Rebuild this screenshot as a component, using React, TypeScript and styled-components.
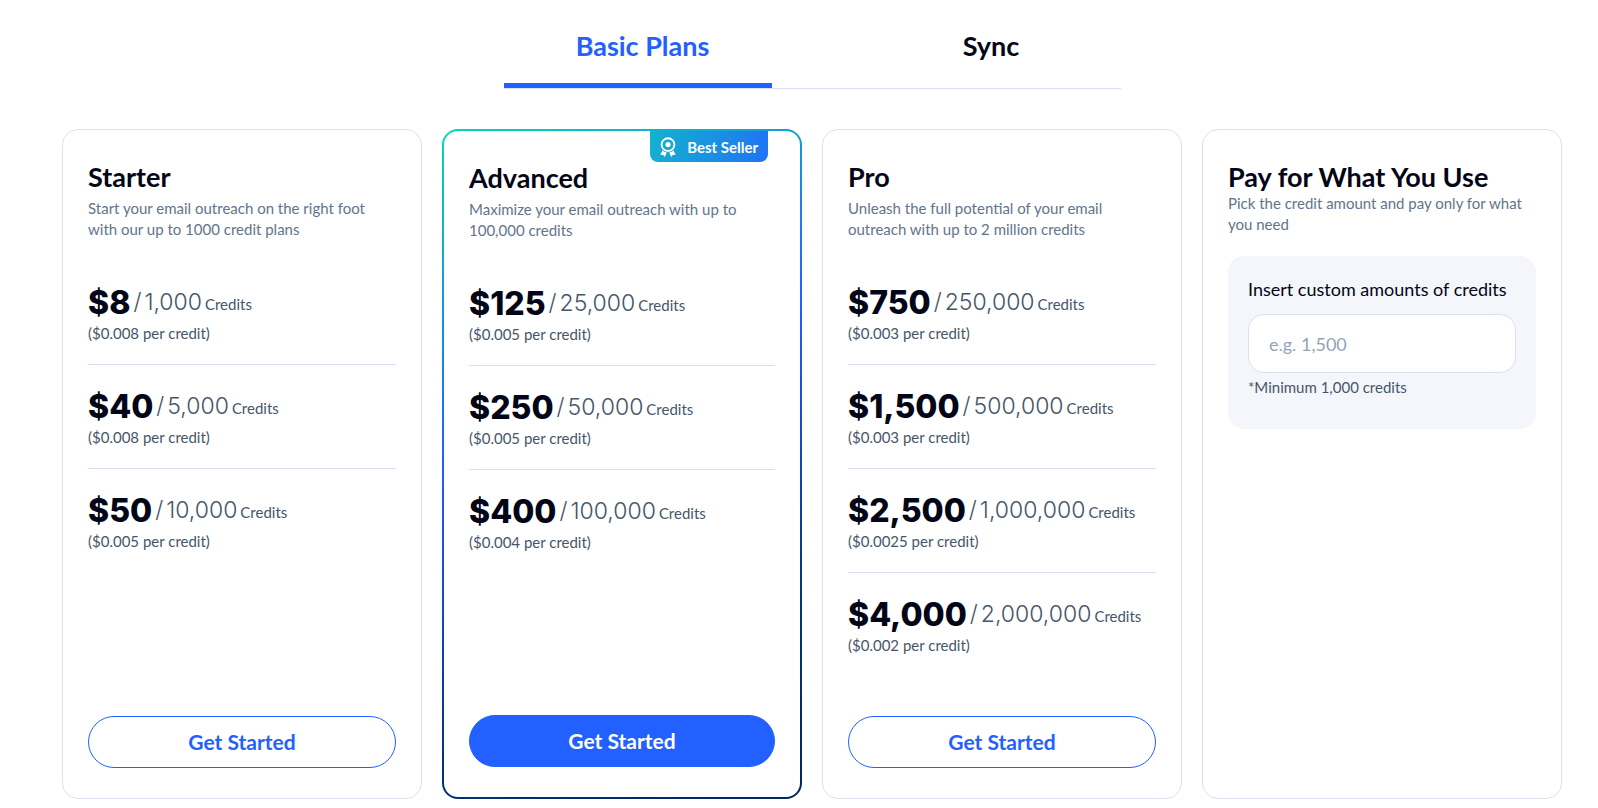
import React, { useState } from "react";
import styled, { createGlobalStyle, css } from "styled-components";

const GlobalStyle = createGlobalStyle`
  *, *::before, *::after { box-sizing: border-box; }
  body {
    margin: 0;
    background: #fff;
    color: #020617;
    font-family: "Lato", "Liberation Sans", sans-serif;
  }
  h2, p, ul { margin: 0; padding: 0; }
  button, input { font-family: inherit; }
`;

const Page = styled.main`
  padding: 29px 36px 9px 62px;
`;

const Tabs = styled.nav`
  display: grid;
  grid-template-columns: 268fr 349fr;
  max-width: 617px;
  margin: 0 auto 40px;
  border-bottom: 1px solid #d9e0ee;
`;

const Tab = styled.button<{ $active: boolean; $inset: number }>`
  padding: 0 0 20px ${(p) => p.$inset}px;
  border: 0;
  border-bottom: 5px solid ${(p) => (p.$active ? "#2260ff" : "transparent")};
  background: none;
  color: ${(p) => (p.$active ? "#2260ff" : "#020617")};
  font-size: 27px;
  font-weight: 700;
  line-height: 34px;
  cursor: pointer;
`;

const Plans = styled.div`
  display: grid;
  grid-template-columns: repeat(4, minmax(0, 1fr));
  gap: 20px;

  @media (max-width: 1360px) {
    grid-template-columns: repeat(2, minmax(0, 1fr));
  }
  @media (max-width: 720px) {
    grid-template-columns: minmax(0, 1fr);
  }
`;

const Card = styled.section<{ $featured?: boolean }>`
  position: relative;
  display: flex;
  flex-direction: column;
  padding: 30px 25px;
  border: 1px solid #dce1ee;
  border-radius: 16px;
  background: #fff;
  ${(p) =>
    p.$featured &&
    css`
      border: 2px solid transparent;
      background:
        linear-gradient(#fff, #fff) padding-box,
        linear-gradient(156deg, #06d6b5 0%, #2260ff 40%, #04357f 74%, #03265f 100%) border-box;
    `}
`;

const Badge = styled.div`
  position: absolute;
  top: 0;
  right: 32px;
  display: flex;
  align-items: center;
  gap: 11px;
  height: 31px;
  padding: 0 10px;
  border-radius: 0 0 8px 8px;
  background: linear-gradient(105deg, #12b3cf, #2072f6);
  color: #fff;
  font-size: 15px;
  font-weight: 700;
`;

const PlanName = styled.h2`
  font-size: 27px;
  font-weight: 700;
  line-height: 33px;
`;

const Description = styled.p<{ $tight?: boolean }>`
  margin: ${(p) => (p.$tight ? 0 : 5)}px 0 21px;
  color: #64748b;
  font-size: 15px;
  line-height: 21px;
`;

const Tiers = styled.ul`
  list-style: none;
  margin-bottom: 40px;
`;

const Tier = styled.li`
  padding: 22px 0 20px;
  & + & {
    border-top: 1px solid #d6deee;
  }
`;

const TierHead = styled.div`
  display: flex;
  align-items: center;
  gap: 3px;
  height: 40px;
  font-family: "Inter", "Liberation Sans", sans-serif;
`;

const Price = styled.strong`
  font-size: 32px;
  font-weight: 800;
  line-height: 40px;
`;

const Amount = styled.span`
  display: flex;
  align-items: baseline;
  gap: 3px;
  color: #475569;
  font-size: 23px;
  font-weight: 300;
  line-height: 38px;
`;

const Unit = styled.span`
  font-family: "Lato", "Liberation Sans", sans-serif;
  font-size: 15px;
  font-weight: 400;
`;

const Note = styled.p`
  color: #475569;
  font-size: 15px;
  line-height: 21px;
`;

const StartButton = styled.button<{ $filled?: boolean }>`
  height: 52px;
  margin-top: auto;
  padding: 0 0 2px;
  border: 1px solid #2260ff;
  border-radius: 26px;
  background: ${(p) => (p.$filled ? "#2260ff" : "#fff")};
  color: ${(p) => (p.$filled ? "#fff" : "#2260ff")};
  font-size: 21px;
  font-weight: 700;
  cursor: pointer;
`;

const CustomPanel = styled.div`
  padding: 20px 20px 31px;
  border-radius: 16px;
  background: #f5f6fb;
`;

const Label = styled.label`
  display: block;
  margin-bottom: 12px;
  font-size: 18px;
  line-height: 26px;
`;

const AmountInput = styled.input`
  display: block;
  width: 100%;
  height: 59px;
  margin-bottom: 4px;
  padding: 0 20px;
  border: 1px solid #dce1ee;
  border-radius: 16px;
  background: #fff;
  color: #020617;
  font-size: 18px;
  &::placeholder {
    color: #94a3b8;
    opacity: 1;
  }
`;

const AwardIcon = () => (
  <svg width="16" height="20" viewBox="0 0 16 20" fill="none" aria-hidden="true">
    <circle cx="8" cy="7.6" r="6.4" stroke="#fff" strokeWidth="1.9" />
    <circle cx="8" cy="7.6" r="2.6" fill="#fff" />
    <path d="M2.4 13.6 0.4 18l2.7-.3L4.8 20l1.9-4.6a9 9 0 0 1-4.3-1.8Z" fill="#fff" />
    <path d="m13.6 13.6 2 4.4-2.7-.3-1.7 2.3-1.9-4.6a9 9 0 0 0 4.3-1.8Z" fill="#fff" />
  </svg>
);

type Plan = {
  name: string;
  text: string;
  featured?: boolean;
  tiers: [price: string, credits: string, rate: string][];
};

const plans: Plan[] = [
  {
    name: "Starter",
    text: "Start your email outreach on the right foot with our up to 1000 credit plans",
    tiers: [
      ["$8", "1,000", "$0.008"],
      ["$40", "5,000", "$0.008"],
      ["$50", "10,000", "$0.005"],
    ],
  },
  {
    name: "Advanced",
    text: "Maximize your email outreach with up to 100,000 credits",
    featured: true,
    tiers: [
      ["$125", "25,000", "$0.005"],
      ["$250", "50,000", "$0.005"],
      ["$400", "100,000", "$0.004"],
    ],
  },
  {
    name: "Pro",
    text: "Unleash the full potential of your email outreach with up to 2 million credits",
    tiers: [
      ["$750", "250,000", "$0.003"],
      ["$1,500", "500,000", "$0.003"],
      ["$2,500", "1,000,000", "$0.0025"],
      ["$4,000", "2,000,000", "$0.002"],
    ],
  },
];

function PlanCard({ plan }: { plan: Plan }) {
  return (
    <Card $featured={plan.featured}>
      {plan.featured && (
        <Badge>
          <AwardIcon />
          Best Seller
        </Badge>
      )}
      <PlanName>{plan.name}</PlanName>
      <Description>{plan.text}</Description>
      <Tiers>
        {plan.tiers.map(([price, credits, rate]) => (
          <Tier key={price}>
            <TierHead>
              <Price>{price}</Price>
              <Amount>
                <span>/</span>
                <span>{credits}</span>
                <Unit>Credits</Unit>
              </Amount>
            </TierHead>
            <Note>({rate} per credit)</Note>
          </Tier>
        ))}
      </Tiers>
      <StartButton type="button" $filled={plan.featured}>
        Get Started
      </StartButton>
    </Card>
  );
}

export default function App() {
  const [tab, setTab] = useState("basic");
  return (
    <Page>
      <GlobalStyle />
      <Tabs>
        <Tab type="button" $active={tab === "basic"} $inset={10} onClick={() => setTab("basic")}>
          Basic Plans
        </Tab>
        <Tab type="button" $active={tab === "sync"} $inset={90} onClick={() => setTab("sync")}>
          Sync
        </Tab>
      </Tabs>
      <Plans>
        {plans.map((plan) => (
          <PlanCard key={plan.name} plan={plan} />
        ))}
        <Card>
          <PlanName>Pay for What You Use</PlanName>
          <Description $tight>Pick the credit amount and pay only for what you need</Description>
          <CustomPanel>
            <Label htmlFor="credits">Insert custom amounts of credits</Label>
            <AmountInput id="credits" type="text" inputMode="numeric" placeholder="e.g. 1,500" />
            <Note>*Minimum 1,000 credits</Note>
          </CustomPanel>
        </Card>
      </Plans>
    </Page>
  );
}
